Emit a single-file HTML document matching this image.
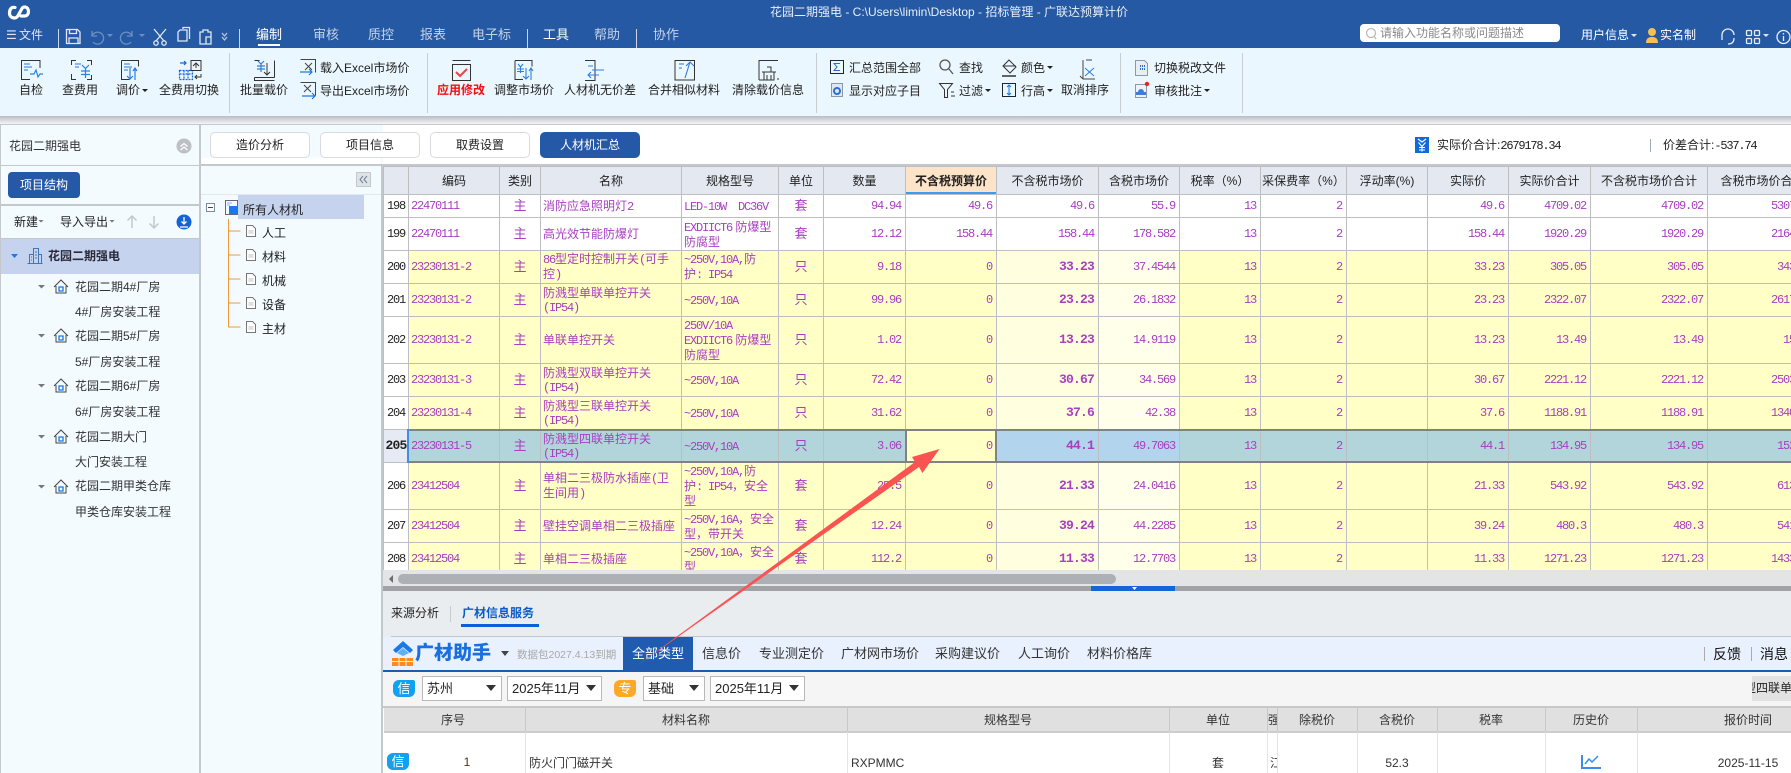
<!DOCTYPE html>
<html lang="zh"><head><meta charset="utf-8"><title>广联达预算计价</title>
<style>
*{box-sizing:border-box}
html,body{margin:0;padding:0;background:#fff}
body{position:relative;width:1791px;height:773px;overflow:hidden;font:12px/16px "Liberation Sans","Noto Sans CJK SC",sans-serif;color:#222}
.a{position:absolute}
.t{position:absolute;white-space:nowrap;line-height:16px}
.c{transform:translateX(-50%)}
.w{color:#fff}.m13{font-size:13px}
.menu{font-size:13px;color:#c3d3ea;top:27px}
.bar{font-size:13px;top:646px;color:#333}
.tab{position:absolute;top:132px;height:26px;width:100px;border:1px solid #d8dbe0;border-radius:5px;background:#fff;text-align:center;line-height:24px}
.sep{position:absolute;top:53px;width:1px;height:60px;background:#c8cdd2}
.mm{position:absolute;top:29px;width:1px;height:20px;background:#c9d6e8}
.sel{position:absolute;height:25px;top:676px;border:1px solid #b8b8b8;background:#fff;font-size:13px;line-height:23px;padding-left:4px}
.sel:after{content:"";position:absolute;right:5px;top:8px;border:5px solid transparent;border-top:6px solid #333;border-bottom:0}
.mono,td:nth-child(1),td:nth-child(2),td:nth-child(n+7),u{font-family:"Liberation Mono",monospace;font-size:12px;letter-spacing:-1.2px;text-decoration:none}
#g{position:absolute;left:383px;top:166px;width:1408px;height:404px;overflow:hidden;background:#fff}
table{border-collapse:collapse;table-layout:fixed;width:1434px}
th,td{border:1px solid #bcbec2;padding:0;overflow:hidden;white-space:nowrap}
th{height:28px;background:#e3e8f1;font-weight:400;font-size:12px;color:#222}
th.h{background:#fde4c8;font-weight:700;box-shadow:inset 0 -2px #3f9bf0}
td{color:#a83ec0;font-size:12px;line-height:14px;text-align:left;padding-left:2px}
td:nth-child(1){color:#222;padding:0;text-align:center;background:#fff}
td:nth-child(3),td:nth-child(6){text-align:center;font-size:13px;padding:0}
td:nth-child(n+7){text-align:right;padding:0 4px 0 0}
tr.y td{background:#ffffc6}
tr.y td:nth-child(1){background:#fff}
tr.y td:nth-child(9){background:#ffffdf;font-weight:700;font-size:13px;letter-spacing:-.8px}
tr.y td:nth-child(10){background:#ffffea}
tr.s td{background:#b2d5dc}
tr.s td:nth-child(1){background:#e6eaf4;font-weight:700;font-size:13px;letter-spacing:-.8px}
tr.s td:nth-child(8){background:#ffffc6}
tr.s td:nth-child(9){background:#b2d4ec;font-weight:700;font-size:13px;letter-spacing:-.8px}
tr.s td:nth-child(10){background:#b2d4ec}
.bh{position:absolute;top:708px;height:25px;background:#e0e0e0;left:384px;width:1407px;border-bottom:2px solid #ccc}
.vl{position:absolute;top:708px;height:65px;width:1px;background:linear-gradient(#c8c8c8 0,#c8c8c8 24px,#e4e4e4 24px)}
.b12{font-size:12px;top:712px;color:#333}
</style></head><body>

<!-- title bar -->
<div class="a" style="left:0;top:0;width:1791px;height:48px;background:#2559a3"></div>
<div class="t w" style="left:770px;top:4px;color:#e8eef7;font-size:12px">花园二期强电 - C:\Users\limin\Desktop - 招标管理 - 广联达预算计价</div>
<div class="t menu" style="left:6px;color:#dfe7f3;font-size:12px">☰</div>
<div class="t menu" style="left:19px;color:#dfe7f3;font-size:12px">文件</div>
<div class="mm" style="left:58px"></div><div class="mm" style="left:239px"></div><div class="mm" style="left:527px"></div><div class="mm" style="left:636px"></div>
<div class="t menu" style="left:256px;color:#fff">编制</div>
<div class="a" style="left:258px;top:44px;width:22px;height:2px;background:#fff"></div>
<div class="t menu" style="left:313px">审核</div>
<div class="t menu" style="left:368px">质控</div>
<div class="t menu" style="left:420px">报表</div>
<div class="t menu" style="left:472px">电子标</div>
<div class="t menu" style="left:543px;color:#fff">工具</div>
<div class="t menu" style="left:594px">帮助</div>
<div class="t menu" style="left:653px">协作</div>
<div class="a" style="left:1360px;top:24px;width:200px;height:18px;background:#fff;border-radius:4px"></div>
<div class="t" style="left:1380px;top:25px;color:#8a8a8a">请输入功能名称或问题描述</div>
<div class="t w" style="left:1581px;top:27px">用户信息</div>
<div class="t w" style="left:1660px;top:27px">实名制</div>

<!-- ribbon -->
<div class="a" style="left:0;top:48px;width:1791px;height:68px;background:#ebf7fe"></div>
<div class="a" style="left:0;top:116px;width:1791px;height:8px;background:linear-gradient(#b9bcc4,#f4f5f7)"></div>
<div class="a" style="left:0;top:124px;width:1791px;height:1px;background:#c6c8cc"></div>
<div class="sep" style="left:229px"></div><div class="sep" style="left:427px"></div><div class="sep" style="left:816px"></div><div class="sep" style="left:1120px"></div><div class="sep" style="left:1242px"></div>
<div class="t c" style="left:31px;top:82px">自检</div>
<div class="t c" style="left:80px;top:82px">查费用</div>
<div class="t c" style="left:128px;top:82px">调价</div>
<div class="t c" style="left:189px;top:82px">全费用切换</div>
<div class="t c" style="left:264px;top:82px">批量载价</div>
<div class="t" style="left:320px;top:60px">载入Excel市场价</div>
<div class="t" style="left:320px;top:83px">导出Excel市场价</div>
<div class="t c" style="left:461px;top:82px;color:#f01010;font-weight:700">应用修改</div>
<div class="t c" style="left:524px;top:82px">调整市场价</div>
<div class="t c" style="left:600px;top:82px">人材机无价差</div>
<div class="t c" style="left:684px;top:82px">合并相似材料</div>
<div class="t c" style="left:768px;top:82px">清除载价信息</div>
<div class="t" style="left:849px;top:60px">汇总范围全部</div>
<div class="t" style="left:849px;top:83px">显示对应子目</div>
<div class="t" style="left:959px;top:60px">查找</div>
<div class="t" style="left:959px;top:83px">过滤</div>
<div class="t" style="left:1021px;top:60px">颜色</div>
<div class="t" style="left:1021px;top:83px">行高</div>
<div class="t c" style="left:1085px;top:82px">取消排序</div>
<div class="t" style="left:1154px;top:60px">切换税改文件</div>
<div class="t" style="left:1154px;top:83px">审核批注</div>

<!-- left panel -->
<div class="a" style="left:0;top:125px;width:383px;height:648px;background:#f3fbff"></div>
<div class="a" style="left:0;top:125px;width:1px;height:648px;background:#c4c7cc"></div>
<div class="a" style="left:199px;top:125px;width:2px;height:648px;background:#c4c7cc"></div>
<div class="a" style="left:381px;top:165px;width:2px;height:608px;background:#c4c7cc"></div>
<div class="a" style="left:0;top:165px;width:200px;height:1px;background:#c4c7cc"></div>
<div class="a" style="left:0;top:204px;width:200px;height:2px;background:#c4c7cc"></div>
<div class="a" style="left:0;top:238px;width:200px;height:1px;background:#c4c7cc"></div>
<div class="t" style="left:9px;top:138px;color:#333">花园二期强电</div>
<div class="a" style="left:8px;top:172px;width:72px;height:26px;background:#2559a8;border-radius:4px;color:#fff;text-align:center;line-height:26px">项目结构</div>
<div class="t" style="left:14px;top:214px">新建</div>
<div class="t" style="left:60px;top:214px">导入导出</div>
<div class="a" style="left:1px;top:239px;width:198px;height:35px;background:#c5d3ee"></div>
<div class="t" style="left:48px;top:248px;font-weight:700;color:#2a2a3a">花园二期强电</div>
<div class="t" style="left:75px;top:279px;color:#333">花园二期4#厂房</div>
<div class="t" style="left:75px;top:304px;color:#333">4#厂房安装工程</div>
<div class="t" style="left:75px;top:328px;color:#333">花园二期5#厂房</div>
<div class="t" style="left:75px;top:354px;color:#333">5#厂房安装工程</div>
<div class="t" style="left:75px;top:378px;color:#333">花园二期6#厂房</div>
<div class="t" style="left:75px;top:404px;color:#333">6#厂房安装工程</div>
<div class="t" style="left:75px;top:429px;color:#333">花园二期大门</div>
<div class="t" style="left:75px;top:454px;color:#333">大门安装工程</div>
<div class="t" style="left:75px;top:478px;color:#333">花园二期甲类仓库</div>
<div class="t" style="left:75px;top:504px;color:#333">甲类仓库安装工程</div>

<!-- second panel -->
<div class="a" style="left:201px;top:158px;width:180px;height:7px;background:#fff"></div>
<div class="a" style="left:201px;top:164px;width:1590px;height:2px;background:#c4c7cc"></div>
<div class="a" style="left:201px;top:194px;width:180px;height:1px;background:#e4e8ec"></div>
<div class="a" style="left:238px;top:195px;width:126px;height:24px;background:#c5d3ee"></div>
<div class="t" style="left:243px;top:202px;color:#222">所有人材机</div>
<div class="t" style="left:262px;top:225px">人工</div>
<div class="t" style="left:262px;top:249px">材料</div>
<div class="t" style="left:262px;top:273px">机械</div>
<div class="t" style="left:262px;top:297px">设备</div>
<div class="t" style="left:262px;top:321px">主材</div>

<!-- tabs -->
<div class="tab" style="left:210px">造价分析</div>
<div class="tab" style="left:320px">项目信息</div>
<div class="tab" style="left:430px">取费设置</div>
<div class="tab" style="left:540px;background:#2559a8;border-color:#2559a8;color:#fff">人材机汇总</div>
<div class="t" style="left:1437px;top:137px">实际价合计:<span class="mono">2679178.34</span></div>
<div class="a" style="left:1650px;top:139px;width:1px;height:13px;background:#9ab"></div>
<div class="t" style="left:1663px;top:137px">价差合计:<span class="mono">-537.74</span></div>

<!-- grid -->
<div id="g"><table>
<colgroup><col style="width:25px"><col style="width:91px"><col style="width:41px"><col style="width:141px"><col style="width:97px"><col style="width:45px"><col style="width:82px"><col style="width:91px"><col style="width:102px"><col style="width:81px"><col style="width:81px"><col style="width:86px"><col style="width:81px"><col style="width:81px"><col style="width:82px"><col style="width:117px"><col style="width:110px"></colgroup>
<tr><th></th><th>编码</th><th>类别</th><th>名称</th><th>规格型号</th><th>单位</th><th>数量</th><th class="h">不含税预算价</th><th>不含税市场价</th><th>含税市场价</th><th>税率（%）</th><th>采保费率（%）</th><th>浮动率(%)</th><th>实际价</th><th>实际价合计</th><th>不含税市场价合计</th><th>含税市场价合计</th></tr>
<tr style="height:23px"><td>198</td><td>22470111</td><td>主</td><td>消防应急照明灯<u>2</u></td><td><u>LED-10W&nbsp;&nbsp;DC36V</u></td><td>套</td><td>94.94</td><td>49.6</td><td>49.6</td><td>55.9</td><td>13</td><td>2</td><td></td><td>49.6</td><td>4709.02</td><td>4709.02</td><td>5307.15</td></tr>
<tr style="height:33px"><td>199</td><td>22470111</td><td>主</td><td>高光效节能防爆灯</td><td><u>EXDIICT6</u> 防爆型<br>防腐型</td><td>套</td><td>12.12</td><td>158.44</td><td>158.44</td><td>178.582</td><td>13</td><td>2</td><td></td><td>158.44</td><td>1920.29</td><td>1920.29</td><td>2164.40</td></tr>
<tr class="y" style="height:33px"><td>200</td><td>23230131-2</td><td>主</td><td><u>86</u>型定时控制开关<u>(</u>可手<br>控<u>)</u></td><td><u>~250V,10A,</u>防<br>护<u>: IP54</u></td><td>只</td><td>9.18</td><td>0</td><td>33.23</td><td>37.4544</td><td>13</td><td>2</td><td></td><td>33.23</td><td>305.05</td><td>305.05</td><td>343.76</td></tr>
<tr class="y" style="height:33px"><td>201</td><td>23230131-2</td><td>主</td><td>防溅型单联单控开关<br><u>(IP54)</u></td><td><u>~250V,10A</u></td><td>只</td><td>99.96</td><td>0</td><td>23.23</td><td>26.1832</td><td>13</td><td>2</td><td></td><td>23.23</td><td>2322.07</td><td>2322.07</td><td>2617.22</td></tr>
<tr class="y" style="height:47px"><td>202</td><td>23230131-2</td><td>主</td><td>单联单控开关</td><td><u>250V/10A</u><br><u>EXDIICT6</u> 防爆型<br>防腐型</td><td>只</td><td>1.02</td><td>0</td><td>13.23</td><td>14.9119</td><td>13</td><td>2</td><td></td><td>13.23</td><td>13.49</td><td>13.49</td><td>15.21</td></tr>
<tr class="y" style="height:33px"><td>203</td><td>23230131-3</td><td>主</td><td>防溅型双联单控开关<br><u>(IP54)</u></td><td><u>~250V,10A</u></td><td>只</td><td>72.42</td><td>0</td><td>30.67</td><td>34.569</td><td>13</td><td>2</td><td></td><td>30.67</td><td>2221.12</td><td>2221.12</td><td>2503.49</td></tr>
<tr class="y" style="height:33px"><td>204</td><td>23230131-4</td><td>主</td><td>防溅型三联单控开关<br><u>(IP54)</u></td><td><u>~250V,10A</u></td><td>只</td><td>31.62</td><td>0</td><td>37.6</td><td>42.38</td><td>13</td><td>2</td><td></td><td>37.6</td><td>1188.91</td><td>1188.91</td><td>1340.06</td></tr>
<tr class="s" style="height:33px"><td>205</td><td>23230131-5</td><td>主</td><td>防溅型四联单控开关<br><u>(IP54)</u></td><td><u>~250V,10A</u></td><td>只</td><td>3.06</td><td>0</td><td>44.1</td><td>49.7063</td><td>13</td><td>2</td><td></td><td>44.1</td><td>134.95</td><td>134.95</td><td>152.10</td></tr>
<tr class="y" style="height:47px"><td>206</td><td>23412504</td><td>主</td><td>单相二三极防水插座<u>(</u>卫<br>生间用<u>)</u></td><td><u>~250V,10A,</u>防<br>护<u>: IP54</u>，安全<br>型</td><td>套</td><td>25.5</td><td>0</td><td>21.33</td><td>24.0416</td><td>13</td><td>2</td><td></td><td>21.33</td><td>543.92</td><td>543.92</td><td>613.06</td></tr>
<tr class="y" style="height:33px"><td>207</td><td>23412504</td><td>主</td><td>壁挂空调单相二三极插座</td><td><u>~250V,16A</u>，安全<br>型，带开关</td><td>套</td><td>12.24</td><td>0</td><td>39.24</td><td>44.2285</td><td>13</td><td>2</td><td></td><td>39.24</td><td>480.3</td><td>480.3</td><td>541.36</td></tr>
<tr class="y" style="height:33px"><td>208</td><td>23412504</td><td>主</td><td>单相二三极插座</td><td><u>~250V,10A</u>，安全<br>型</td><td>套</td><td>112.2</td><td>0</td><td>11.33</td><td>12.7703</td><td>13</td><td>2</td><td></td><td>11.33</td><td>1271.23</td><td>1271.23</td><td>1433.00</td></tr>
</table></div>
<!-- selected row outline -->
<div class="a" style="left:409px;top:429px;width:1382px;height:2px;background:#808284"></div>
<div class="a" style="left:409px;top:461px;width:1382px;height:2px;background:#808284"></div>
<div class="a" style="left:407px;top:429px;width:2px;height:34px;background:#3f8fe8"></div>
<div class="a" style="left:905px;top:429px;width:2px;height:34px;background:#808284"></div>
<div class="a" style="left:995px;top:429px;width:2px;height:34px;background:#808284"></div>

<!-- scrollbar / splitter -->
<div class="a" style="left:383px;top:570px;width:1408px;height:16px;background:#e3e4e6"></div>
<div class="a" style="left:398px;top:574px;width:718px;height:10px;background:#adb0b4;border-radius:5px"></div>
<div class="a" style="left:383px;top:586px;width:1408px;height:5px;background:#a0a2a5"></div>
<div class="a" style="left:1091px;top:586px;width:84px;height:5px;background:#1565d8"></div>

<!-- lower pane -->
<div class="a" style="left:383px;top:591px;width:1408px;height:46px;background:#e9edf0"></div>
<div class="t" style="left:391px;top:605px;color:#222">来源分析</div>
<div class="a" style="left:450px;top:606px;width:1px;height:16px;background:#c8ccd0"></div>
<div class="t" style="left:462px;top:605px;color:#0b5bc8;font-weight:700">广材信息服务</div>
<div class="a" style="left:461px;top:624px;width:78px;height:3px;background:#0b5fd8"></div>
<div class="a" style="left:391px;top:636px;width:1400px;height:1px;background:#c4c7ca"></div>
<div class="a" style="left:383px;top:637px;width:1408px;height:33px;background:#e9f1fe"></div>
<div class="a" style="left:383px;top:670px;width:1408px;height:2px;background:#1f5bae"></div>
<div class="a" style="left:623px;top:637px;width:70px;height:33px;background:#1f5bae"></div>
<div class="t" style="left:415px;top:644px;font-size:19px;line-height:20px;font-weight:900;color:#1a6fe0">广材助手</div>
<div class="t" style="left:517px;top:647px;font-size:10.5px;color:#a8a8a8">数据包2027.4.13到期</div>
<div class="t bar" style="left:632px;color:#fff">全部类型</div>
<div class="t bar" style="left:702px">信息价</div>
<div class="t bar" style="left:759px">专业测定价</div>
<div class="t bar" style="left:841px">广材网市场价</div>
<div class="t bar" style="left:935px">采购建议价</div>
<div class="t bar" style="left:1018px">人工询价</div>
<div class="t bar" style="left:1087px">材料价格库</div>
<div class="a" style="left:1704px;top:647px;width:1px;height:14px;background:#aaa"></div>
<div class="t" style="left:1713px;top:646px;font-size:14px;color:#111">反馈</div>
<div class="a" style="left:1751px;top:647px;width:1px;height:14px;background:#aaa"></div>
<div class="t" style="left:1760px;top:646px;font-size:14px;color:#111">消息</div>
<div class="a" style="left:383px;top:672px;width:1408px;height:34px;background:#f5f5f5"></div>
<div class="a" style="left:383px;top:706px;width:1408px;height:2px;background:#c8c8c8"></div>
<div class="a" style="left:393px;top:680px;width:22px;height:17px;background:#12a0f0;border-radius:6px 2px 6px 6px;color:#fff;text-align:center;font-size:13px;line-height:17px">信</div>
<div class="a" style="left:614px;top:680px;width:22px;height:17px;background:#ffa726;border-radius:6px 2px 6px 6px;color:#fff;text-align:center;font-size:13px;line-height:17px">专</div>
<div class="sel" style="left:422px;width:80px">苏州</div>
<div class="sel" style="left:507px;width:95px">2025年11月</div>
<div class="sel" style="left:643px;width:62px">基础</div>
<div class="sel" style="left:710px;width:95px">2025年11月</div>
<div class="a" style="left:1752px;top:676px;width:39px;height:25px;background:#e2e2e2;overflow:hidden;white-space:nowrap;line-height:25px;font-size:12px"><span style="margin-left:-8px;display:inline-block">型四联单</span></div>
<div class="bh"></div>
<div class="a" style="left:383px;top:733px;width:1408px;height:40px;background:#fff"></div>
<div class="vl" style="left:525px"></div><div class="vl" style="left:847px"></div><div class="vl" style="left:1169px"></div><div class="vl" style="left:1267px"></div><div class="vl" style="left:1277px"></div><div class="vl" style="left:1357px"></div><div class="vl" style="left:1437px"></div><div class="vl" style="left:1545px"></div><div class="vl" style="left:1637px"></div>
<div class="t c b12" style="left:453px">序号</div>
<div class="t c b12" style="left:686px">材料名称</div>
<div class="t c b12" style="left:1008px">规格型号</div>
<div class="t c b12" style="left:1218px">单位</div>
<div class="a" style="left:1268px;top:712px;width:9px;height:16px;overflow:hidden;color:#333;line-height:16px;white-space:nowrap">强</div>
<div class="t c b12" style="left:1317px">除税价</div>
<div class="t c b12" style="left:1397px">含税价</div>
<div class="t c b12" style="left:1491px">税率</div>
<div class="t c b12" style="left:1591px">历史价</div>
<div class="t c b12" style="left:1748px">报价时间</div>
<div class="a" style="left:387px;top:753px;width:22px;height:17px;background:#12a0f0;border-radius:6px 2px 6px 6px;color:#fff;text-align:center;font-size:13px;line-height:17px">信</div>
<div class="t c" style="left:467px;top:754px;color:#5a3010">1</div>
<div class="t" style="left:529px;top:755px;color:#333">防火门门磁开关</div>
<div class="t" style="left:851px;top:755px;color:#333">RXPMMC</div>
<div class="t c" style="left:1218px;top:755px;color:#333">套</div>
<div class="a" style="left:1270px;top:755px;width:7px;height:16px;overflow:hidden;color:#333;line-height:16px;white-space:nowrap">江</div>
<div class="t c" style="left:1397px;top:755px;color:#333">52.3</div>
<div class="t c" style="left:1748px;top:755px;color:#333">2025-11-15</div>

<!-- icons overlay -->
<svg class="a" style="left:0;top:0" width="1791" height="773" viewBox="0 0 1791 773" fill="none">
<!-- logo -->
<g stroke="#fff" stroke-width="3.200" stroke-linecap="round"><path d="M15 7.500C11 6.500 9.500 10 9.500 13c0 3 2 5 5 5 1.500 0 2.500-.8 3.300-2L22 8.500c.6-1 1.400-1.500 2.500-1.500 2.500 0 4 2 4 4.500S27 16 24.500 16H21"/></g>
<!-- qat -->
<g stroke="#dfe7f3" stroke-width="1.300"><path d="M66.500 29.500h11l2.500 2.500v11.500h-13.500zM69.500 29.500v4h7v-4M69 43.500v-5.500h9v5.500"/><path d="M154 29l10 12M166 29l-10 12"/><circle cx="156" cy="43" r="2.200"/><circle cx="164" cy="43" r="2.200"/><path d="M180 30h7v11h-9v-9zM183 29v-1.500h6.500v11.500"/><path d="M200 32h3v-2h5v2h3v12h-11zM206 37h5v7h-5z"/><path d="M222 33l2.500 3 2.500-3M222 37l2.500 3 2.500-3" stroke="#b6c6de"/></g>
<g stroke="#6d8fc0" stroke-width="1.300"><path d="M92 31v5h5M92 36a6 6 0 1 1 1 6M132 31v5h-5M132 36a6 6 0 1 0-1 6"/></g>
<path d="M107 34l3 3 3-3zM139 34l3 3 3-3z" fill="#6d8fc0"/>
<!-- right top -->
<path d="M1646 47c0-5 3-6 6-6s6 1 6 6zM1652 32a4 4 0 1 1 0 8 4 4 0 0 1 0-8z" fill="#f7c04e" transform="translate(0 -4)"/>
<path d="M1631 34l3 3 3-3zM1763 34l3 3 3-3z" fill="#dfe7f3"/>
<g stroke="#e7edf6" stroke-width="1.300"><path d="M1722 40v-5a6 6 0 1 1 12 0M1734 38c0 4-2 6-6 6"/><rect x="1746.500" y="30.500" width="5" height="5" rx="1"/><rect x="1754.500" y="30.500" width="5" height="5" rx="1"/><rect x="1746.500" y="38.500" width="5" height="5" rx="1"/><rect x="1754.500" y="38.500" width="5" height="5" rx="1"/><circle cx="1783.500" cy="37" r="6.500"/><path d="M1783.500 36v5M1783.500 33v1.500"/></g>
<circle cx="1371" cy="33" r="4.500" stroke="#bbb" stroke-width="1.300"/><path d="M1374 36l2 3" stroke="#bbb" stroke-width="1.300"/>
<!-- ribbon icons -->
<g stroke="#333"><path d="M21.500 74V60.500H40V68M21.500 74v5.500H30"/><path d="M71.500 65v-4.500H76M87 60.500h4.500V65M71.500 74v5.500H76M87 79.500h4.500V75"/><path d="M121.500 60.500h17v6M121.500 60.500v19h8"/><path d="M254.500 77.500h20M274.500 60.500v17M254.500 60.500h5M254.500 77.500v3h20"/></g>
<g stroke="#8ab6ee" stroke-width="2"><path d="M24 64h6M24 67h8M24 70h4M75 64h6M75 67h4M124 64h6M124 67h8M124 70h4"/></g>
<g stroke="#2d7fe0" stroke-width="1.200"><path d="M30 74h4l2-4 2 7 2-3h3M82 65l3.500 3.500L89 65M85.500 68.500V78M81 71h9M81 74.500h9M130 68v11m-3-3 3 3 3-3M135 80V68m-2 3 2-3 2 3"/><path d="M258 61l3 3 3-3M261 64v8M257 66h8M257 69h8"/></g>
<path d="M267 63v12m-3-3 3 3 3-3" stroke="#333"/>
<g stroke="#1565d8" stroke-width="1.200"><path d="M179.500 70.500h13v9h-13zM179.500 74h13M184 70.500v9M188 70.500v9" stroke-dasharray="2 1"/><path d="M180 63h6m-2-2 2 2-2 2"/></g>
<rect x="191" y="60.500" width="10" height="10" stroke="#333" fill="#eef3f8"/><path d="M193 66l3-3 3 3M196 63v5" stroke="#333"/><path d="M201 74v3h-6m2-2-2 2 2 2" stroke="#333"/>
<g stroke="#444"><path d="M300.500 59.500h15v13"/><path d="M305 63l7 7M312 63l-7 7"/><path d="M300.500 82.500h15v13" /><path d="M304 85l7 7M311 85l-7 7"/></g>
<g stroke="#1a78e0" stroke-width="1.200"><path d="M300 72h12m-3-3 3 3-3 3M302 96h13m-3-3 3 3-3 3"/></g>
<path d="M452.500 60.500h18M452.500 64.500h18v16h-18z" stroke="#333"/><path d="M456 72l4 4 7-7" stroke="#f04040" stroke-width="2"/>
<g stroke="#333"><path d="M515 60.500h17v6M515 60.500v19h8"/><path d="M595 60.500h10v20h-10" transform="translate(-10 0)" /><path d="M675 60.500h19.500v19.500H675zM732 60h0" /><path d="M759 80V60.500h19M759 80h6M778 80v-2"/></g>
<g stroke="#2d7fe0" stroke-width="1.100"><path d="M518 64l2.500 3 2.500-3M520.500 67v6M517 69h7M517 71.500h7M526 68v11m-3-3 3 3 3-3M531 80V68m-2 3 2-3 2 3"/><path d="M594 70h12M590 66h5m-5 9h11m-8-3-3 3 3 3" transform="translate(-2 0)"/><path d="M690 62l-5 16M686 66l4-4 4 4"/></g>
<g stroke="#8ab6ee" stroke-width="2"><path d="M679 64h5M679 68h3"/></g>
<path d="M764 72h10v8h-10zM762 72h14M767 67h4v5M767 75v5M771 75v5" stroke="#333"/>
<rect x="830.500" y="60.500" width="13" height="13" stroke="#223"/><path d="M840 63.500h-6l3 3.500-3 3.500h6" stroke="#2d6fd0"/>
<rect x="831.500" y="83.500" width="11" height="13" stroke="#8a99aa" fill="#dfe8f2"/><circle cx="837" cy="91" r="3" stroke="#2d6fd0" stroke-width="2"/>
<circle cx="945" cy="65" r="5" stroke="#555" stroke-width="1.300"/><path d="M949 69l4 5" stroke="#555" stroke-width="1.300"/>
<path d="M939.500 83.500h13l-5 6v8h-3v-8zM951 96h4M951 92h3" stroke="#333"/>
<path d="M1009 60l7 7-6 6-7-7zM1003 66h13" stroke="#333"/><path d="M1002 76h14" stroke="#333" stroke-width="1.500"/>
<rect x="1002.500" y="83.500" width="13" height="13" stroke="#223"/><path d="M1009 85v10m-2-8 2-2 2 2m-4 6 2 2 2-2" stroke="#1a78e0"/>
<path d="M1083 60v19m-3-3 3 3M1086 60h6M1083 79h12" stroke="#444"/><path d="M1085 68l9 8M1094 68l-9 8" stroke="#2d7fe0"/>
<g stroke="#8a99aa"><path d="M1135.500 60.500h9l3 3v12h-12z" fill="#e8eef4"/><path d="M1135.500 84.500h11v13h-11z" fill="#eef3f8"/></g>
<path d="M1140 66h5M1140 69h5" stroke="#2d6fd0" stroke-dasharray="1 1" stroke-width="2"/><path d="M1138 92a3 3 0 0 1 6 0h2v3h-10v-3z" fill="#3d7fd8"/><circle cx="1147" cy="84" r="2.200" fill="#f02020"/>
<path d="M142 89h6l-3 3zM985 89h6l-3 3zM1047 66h6l-3 3zM1047 89h6l-3 3zM1204 89h6l-3 3z" fill="#222"/>
<!-- left panel icons -->
<circle cx="184" cy="146" r="7.500" fill="#bcbfc6"/><path d="M180.500 146.500l3.500-3 3.500 3M180.500 150l3.500-3 3.500 3" stroke="#fff" stroke-width="1.200"/>
<path d="M38.500 220l2.500 2.500 2.500-2.500zM109.500 220l2.500 2.500 2.500-2.500z" fill="#777"/>
<path d="M132 216v12m-4.500-7.500 4.500-4.500 4.500 4.500M154 216v12m-4.500-4.500 4.500 4.500 4.500-4.500" stroke="#c3c8cf" stroke-width="1.500"/>
<circle cx="184" cy="222" r="7.500" fill="#1462d8"/><path d="M184 217v7m-2.500-2.500 2.500 2.500 2.500-2.500M180 227h8" stroke="#fff" stroke-width="1.300"/>
<path d="M11 254h7l-3.500 4z" fill="#1a78e8"/>
<g stroke="#3f78b8"><path d="M27.500 263.500h15M29.500 263.500v-9h4v9M33.500 263.500v-15h5v15M38.500 254.500h3v9M35 252h2M35 255h2M35 258h2M31 257h1M31 260h1"/></g>
<g fill="#777"><path d="M38 285h7l-3.500 3.500zM38 334h7l-3.500 3.500zM38 384h7l-3.500 3.500zM38 435h7l-3.500 3.500zM38 485h7l-3.500 3.500z"/></g>
<g stroke="#444"><path d="M54 287l7-7 7 7M56 286v7h10v-7"/><path d="M54 336l7-7 7 7M56 335v7h10v-7M54 386l7-7 7 7M56 385v7h10v-7M54 437l7-7 7 7M56 436v7h10v-7M54 487l7-7 7 7M56 486v7h10v-7"/></g>
<g stroke="#1a78e8" stroke-width="1.300"><path d="M59 287h4v4h-4zM59 336h4v4h-4zM59 386h4v4h-4zM59 437h4v4h-4zM59 487h4v4h-4z"/></g>
<!-- second panel icons -->
<rect x="356.500" y="172.500" width="14" height="14" fill="#dfe3e8" stroke="#c4c8cc"/><path d="M363 176l-3 3.500 3 3.500M367 176l-3 3.500 3 3.500" stroke="#6f7f92"/>
<rect x="206.500" y="203.500" width="8" height="8" stroke="#7a8aa0" fill="#fff"/><path d="M208 207.500h5" stroke="#445"/>
<path d="M225.500 200.500h12v14h-12z" stroke="#667"/><rect x="229" y="206" width="8" height="8" fill="#1a78e8"/><path d="M227 203h5M227 205h3" stroke="#8ab6ee"/>
<path d="M228.500 219v108.500M228.500 231h12M228.500 255h12M228.500 279h12M228.500 303h12M228.500 327h12" stroke="#f0983a"/>
<g stroke="#777" fill="#fff"><path d="M246.500 225.500h6l3 3v8h-9zM246.500 249.500h6l3 3v8h-9zM246.500 273.500h6l3 3v8h-9zM246.500 297.500h6l3 3v8h-9zM246.500 321.500h6l3 3v8h-9z"/></g>
<path d="M248.500 231h5M248.500 233h5M248.500 255h5M248.500 257h5M248.500 279h5M248.500 281h5M248.500 303h5M248.500 305h5M248.500 327h5M248.500 329h5" stroke="#c2c2c2"/>
<!-- yen summary -->
<rect x="1415" y="137" width="14" height="16" fill="#1468d8"/><path d="M1418 139l4 3 4-3M1418.500 142.500l3.500 4 3.500-4M1422 146.500v5M1419 147.500h6M1419 150h6" stroke="#fff" stroke-width="1.100"/>
<!-- scrollbar arrow + split mark -->
<path d="M389 578l4-4v8z" fill="#6a6c70" transform="translate(0 1)"/>
<path d="M1132 587h5l-2.500 3z" fill="#fff"/>
<!-- lower logo -->
<path d="M403 641l10 9-3 3-7-6-7 6-3-3z" fill="#1a78e8"/><path d="M403 648l6 5-6 3-6-3z" fill="#5fb0f5"/>
<path d="M392 658h21v3h-21zM392 662h21v4h-21z" fill="#ff8a1c"/><path d="M399 658v8M406 658v8" stroke="#e9f1fe"/>
<path d="M501 651h8l-4 5z" fill="#444"/>
<!-- chart -->
<path d="M1582 755v13h19" stroke="#3b8cf0" stroke-width="2"/><path d="M1585 764l4-5 3 3 6-6" stroke="#3b8cf0" stroke-width="1.500"/>
<!-- red annotation arrow -->
<polygon points="631,670 915,462 912,457 939.500,449 922.500,473 919,467" fill="#fb5252"/>
</svg>
</body></html>
